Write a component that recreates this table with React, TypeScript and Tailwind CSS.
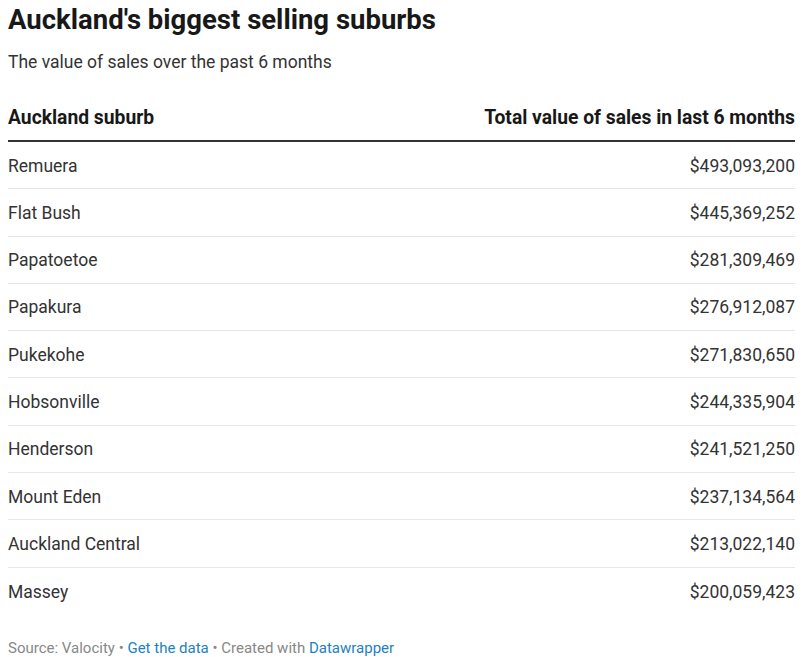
const rows: [string, string][] = [
  ["Remuera", "$493,093,200"],
  ["Flat Bush", "$445,369,252"],
  ["Papatoetoe", "$281,309,469"],
  ["Papakura", "$276,912,087"],
  ["Pukekohe", "$271,830,650"],
  ["Hobsonville", "$244,335,904"],
  ["Henderson", "$241,521,250"],
  ["Mount Eden", "$237,134,564"],
  ["Auckland Central", "$213,022,140"],
  ["Massey", "$200,059,423"],
];

export default function App() {
  return (
    <div className="w-[806px] bg-white pl-[8px] pr-[11px] font-['Roboto',sans-serif] text-[#333333]">
      <h1 className="pt-[5px] text-[27.5px] font-bold leading-[30px] text-[#181818]">
        Auckland's biggest selling suburbs
      </h1>
      <p className="mt-[16px] text-[17.5px] leading-[22px] text-[#333333]">
        The value of sales over the past 6 months
      </p>

      <div className="mt-[24px]">
        <div className="flex h-[45px] items-center justify-between border-b-2 border-[#333333] text-[19.3px] font-bold text-[#181818]">
          <span>Auckland suburb</span>
          <span>Total value of sales in last 6 months</span>
        </div>
        {rows.map(([suburb, value], i) => (
          <div
            key={suburb}
            className={
              i < rows.length - 1
                ? "flex h-[47.3px] items-center justify-between border-b border-[#e6e6e6] pt-[1px] text-[17.5px]"
                : "flex h-[47.3px] items-center justify-between pt-[1px] text-[17.5px]"
            }
          >
            <span>{suburb}</span>
            <span>{value}</span>
          </div>
        ))}
      </div>

      <p className="mt-[24px] text-[15px] leading-[18px] text-[#888888]">
        Source: Valocity • <span className="text-[#1d81c3]">Get the data</span> • Created with{" "}
        <span className="text-[#1d81c3]">Datawrapper</span>
      </p>
    </div>
  );
}
